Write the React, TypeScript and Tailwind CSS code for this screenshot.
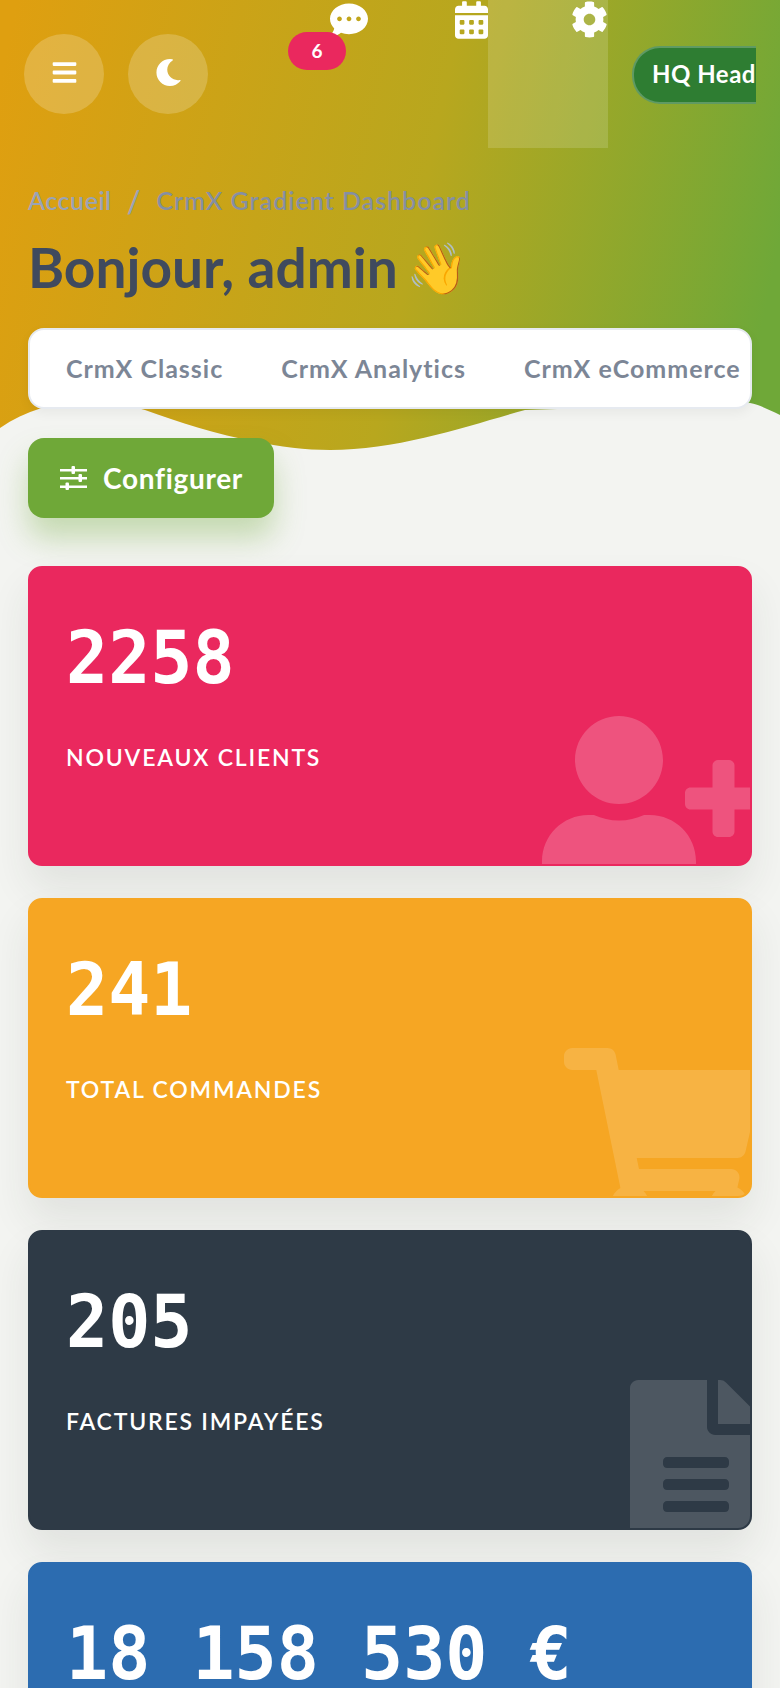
import React from "react";
import {
  FaBars,
  FaMoon,
  FaCommentDots,
  FaCalendarAlt,
  FaCog,
  FaUserPlus,
  FaShoppingCart,
  FaFileAlt,
} from "react-icons/fa";

const StatCard = ({
  value,
  label,
  color,
  icon,
}: {
  value: string;
  label?: string;
  color: string;
  icon?: React.ReactNode;
}) => (
  <div className={`relative h-[300px] overflow-hidden rounded-[14px] border-2 shadow-[0_22px_40px_rgba(40,50,45,0.09)] ${color}`}>
    <div className="h-[128px] origin-top-left scale-y-[1.05] pl-[36px] pt-[55px] font-['DejaVu_Sans_Mono',monospace] text-[70px] leading-[62px] font-bold whitespace-pre text-white">
      {value}
    </div>
    {label && (
      <div className="pl-[36px] pt-[46px] text-[23px] leading-[30px] font-semibold tracking-[1.8px] text-white uppercase">
        {label}
      </div>
    )}
    {icon}
  </div>
);

const App: React.FC = () => {
  return (
    <div className="relative h-[1688px] w-[780px] overflow-hidden bg-[#f3f4f1] font-['Lato',sans-serif]">
      {/* header wave */}
      <svg className="absolute top-0 left-0" width="780" height="460" viewBox="0 0 780 460">
        <defs>
          <linearGradient id="hdr" gradientUnits="userSpaceOnUse" x1="0" y1="80" x2="780" y2="240">
            <stop offset="0" stopColor="#df9f10" />
            <stop offset="0.55" stopColor="#b8a71e" />
            <stop offset="1" stopColor="#6fa838" />
          </linearGradient>
        </defs>
        <path
          d="M0 0H780V415C770 410 760 405 750 403L525 410C470 425 400 450 330 450C270 450 200 430 145 410C90 395 40 400 0 428Z"
          fill="url(#hdr)"
        />
      </svg>

      <div className="relative">
        {/* top bar */}
        <div className="flex h-[148px] items-start pl-[24px]">
          <div className="mt-[34px] flex gap-[24px]">
            <button className="flex h-[80px] w-[80px] items-center justify-center rounded-full bg-white/20 pb-[4px] text-white">
              <FaBars size={27} />
            </button>
            <button className="flex h-[80px] w-[80px] items-center justify-center rounded-full bg-white/20 pb-[4px] text-white">
              <FaMoon size={27} />
            </button>
          </div>
          <div className="relative mt-[1px] ml-[122px] text-white">
            <FaCommentDots size={38} />
            <span className="absolute top-[31px] left-[-42px] flex h-[38px] w-[58px] items-center justify-center rounded-full bg-[#ea285e] text-[19px] font-bold text-white">
              6
            </span>
          </div>
          <div className="mt-[1px] ml-[87px] text-white">
            <FaCalendarAlt className="h-[38px] w-[33px]" />
          </div>
          <div className="flex h-[148px] w-[120px] justify-end bg-white/15 pt-[1px] text-white">
            <FaCog size={37} />
          </div>
          <div className="mt-[46px] ml-[24px] flex h-[58px] w-[124px] items-center overflow-hidden rounded-l-[28px] border-2 border-r-0 border-[#5f9a63] bg-[#2e7d32] pb-[2px] pl-[18px] text-[24px] font-bold tracking-[0.5px] whitespace-nowrap text-white">
            HQ Head
          </div>
        </div>

        {/* title */}
        <div className="px-[28px]">
          <div className="mt-[38px] flex h-[30px] items-center text-[25px] font-semibold tracking-[1px]">
            <span className="tracking-[0.5px] text-[#9aa3b5]">Accueil</span>
            <span className="mx-[15px] text-[30px] text-[#9aa3b5]">/</span>
            <span className="text-[#858fa3]">CrmX Gradient Dashboard</span>
          </div>
          <div className="mt-[21px] flex h-[60px] items-center text-[55px] font-bold text-[#3f4a5e]">
            Bonjour, admin <span className="ml-[8px] text-[50px]">👋</span>
          </div>

          {/* tabs */}
          <div className="mt-[31px] flex h-[81px] items-center gap-[58px] rounded-[16px] border-2 border-[#e6eaf0] bg-white pl-[36px] text-[25px] font-bold tracking-[1px] whitespace-nowrap text-[#7c8696] shadow-[0_4px_12px_rgba(0,0,0,0.05)]">
            <span>CrmX Classic</span>
            <span>CrmX Analytics</span>
            <span>CrmX eCommerce</span>
          </div>

          <button className="mt-[29px] flex h-[80px] w-[246px] items-center gap-[16px] rounded-[16px] bg-[#6fa838] pl-[32px] text-[28px] font-bold tracking-[0.7px] text-white shadow-[0_20px_30px_rgba(111,168,56,0.35)]">
            <svg width="27" height="24" viewBox="0 0 27 24" fill="white">
              <rect x="0" y="3" width="27" height="2.5" />
              <rect x="0" y="11" width="27" height="2.5" />
              <rect x="0" y="19.5" width="27" height="2.5" />
              <rect x="11.5" y="0" width="3.5" height="8" rx="1" />
              <rect x="18.5" y="8" width="3.5" height="8" rx="1" />
              <rect x="5.5" y="16.5" width="3.5" height="7.5" rx="1" />
            </svg>
            Configurer
          </button>

          {/* cards */}
          <div className="mt-[48px] flex flex-col gap-[32px]">
            <StatCard
              value="2258"
              label="Nouveaux clients"
              color="border-[#ea285e] bg-[#ea285e]"
              icon={
                <div className="absolute top-[148px] right-[-12px] text-white/20">
                  <FaUserPlus className="h-[176px] w-[220px]" />
                </div>
              }
            />
            <StatCard
              value="241"
              label="Total commandes"
              color="border-[#f6a623] bg-[#f6a623]"
              icon={
                <div className="absolute top-[148px] right-[-12px] text-white/15">
                  <FaShoppingCart className="h-[176px] w-[198px]" />
                </div>
              }
            />
            <StatCard
              value="205"
              label="Factures impayées"
              color="border-[#2e3a46] bg-[#2e3a46]"
              icon={
                <div className="absolute top-[148px] right-[-12px] text-white/15">
                  <FaFileAlt className="h-[176px] w-[132px]" />
                </div>
              }
            />
            <StatCard value="18 158 530 €" color="border-[#2c6cb0] bg-[#2c6cb0]" />
          </div>
        </div>
      </div>
    </div>
  );
};

export default App;
